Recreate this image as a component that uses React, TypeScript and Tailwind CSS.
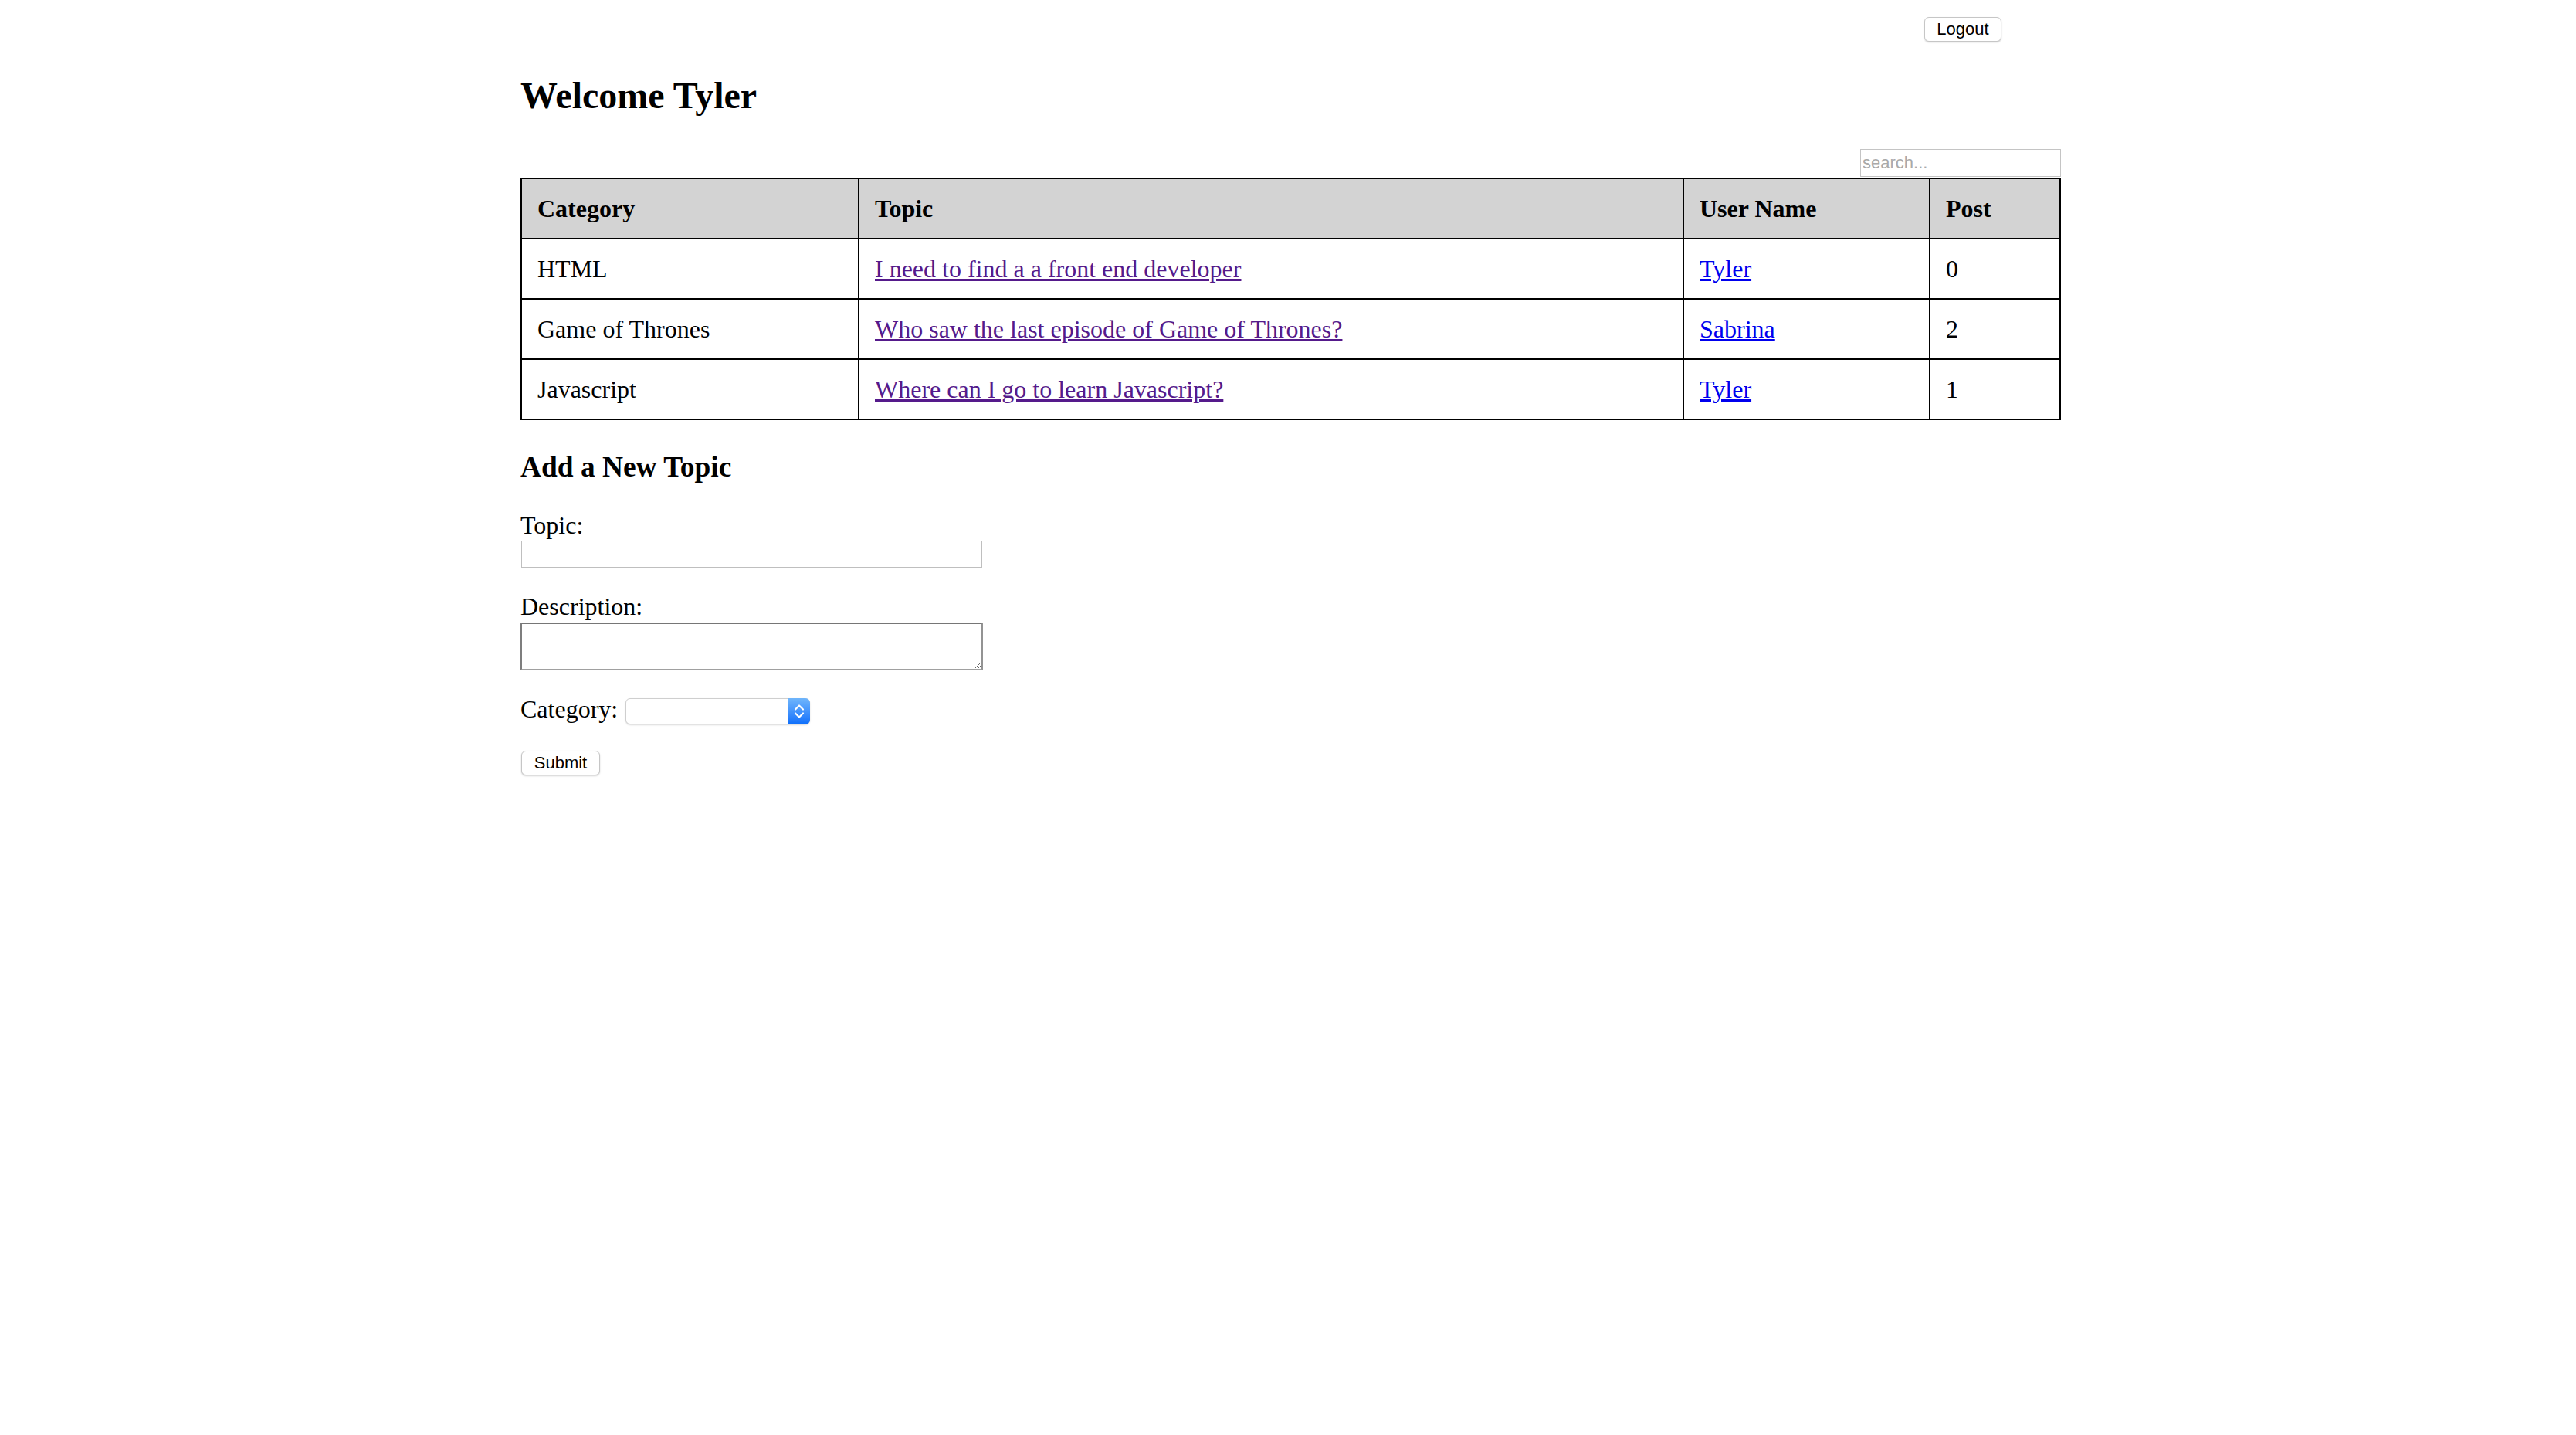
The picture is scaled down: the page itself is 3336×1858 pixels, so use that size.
import { useState } from 'react'

const topics = [
  { category: 'HTML', topic: 'I need to find a a front end developer', user: 'Tyler', posts: 0 },
  { category: 'Game of Thrones', topic: 'Who saw the last episode of Game of Thrones?', user: 'Sabrina', posts: 2 },
  { category: 'Javascript', topic: 'Where can I go to learn Javascript?', user: 'Tyler', posts: 1 },
]

const cell = 'border-2 border-black px-[20px] py-[20px] text-left align-middle leading-[36px]'

const App = () => {
  const [search, setSearch] = useState('')
  const [topic, setTopic] = useState('')
  const [description, setDescription] = useState('')
  const [category, setCategory] = useState('')

  return (
    <div className="min-h-screen bg-white font-['Liberation_Serif',serif] text-[32px] text-black">
      <div className="ml-[674px] w-[1995px] pt-[22px]">
        {/* top bar */}
        <div className="flex justify-end pr-[77px]">
          <button className="h-[32px] w-[100px] rounded-[6px] border border-[#c6c6c6] bg-white font-['Liberation_Sans',sans-serif] text-[22px] leading-none text-black shadow-[0_1px_2px_rgba(0,0,0,0.18)]">
            Logout
          </button>
        </div>

        <h2 className="mt-[42px] text-[48px] font-bold leading-[56px]">Welcome Tyler</h2>

        <div className="mt-[41px] flex justify-end">
          <input
            value={search}
            onChange={(e) => setSearch(e.target.value)}
            placeholder="search..."
            className="h-[36px] w-[260px] border border-[#c4c4c4] px-[2px] font-['Liberation_Sans',sans-serif] text-[22px] text-black outline-none placeholder:text-[#a9a9a9]"
          />
        </div>

        <table className="mt-[1px] w-full table-fixed border-collapse border-2 border-black">
          <colgroup>
            <col className="w-[437px]" />
            <col className="w-[1068px]" />
            <col className="w-[319px]" />
            <col />
          </colgroup>
          <thead>
            <tr className="bg-[#d3d3d3]">
              <th className={`${cell} font-bold`}>Category</th>
              <th className={`${cell} font-bold`}>Topic</th>
              <th className={`${cell} font-bold`}>User Name</th>
              <th className={`${cell} font-bold`}>Post</th>
            </tr>
          </thead>
          <tbody>
            {topics.map((row) => (
              <tr key={row.topic}>
                <td className={cell}>{row.category}</td>
                <td className={cell}>
                  <a href="#" className="text-[#551a8b] underline">
                    {row.topic}
                  </a>
                </td>
                <td className={cell}>
                  <a href="#" className="text-[#0000ee] underline">
                    {row.user}
                  </a>
                </td>
                <td className={cell}>{row.posts}</td>
              </tr>
            ))}
          </tbody>
        </table>

        {/* new topic form */}
        <h3 className="mt-[39px] text-[37.4px] font-bold leading-[43px]">Add a New Topic</h3>

        <form onSubmit={(e) => e.preventDefault()}>
          <label className="mt-[36px] block leading-[36px]">Topic:</label>
          <input
            value={topic}
            onChange={(e) => setTopic(e.target.value)}
            className="mt-[2px] ml-[1px] block h-[35px] w-[597px] border border-[#bfbfbf] outline-none"
          />

          <label className="mt-[32px] block leading-[36px]">Description:</label>
          <textarea
            value={description}
            onChange={(e) => setDescription(e.target.value)}
            className="mt-[3px] block h-[62px] w-[599px] border-2 border-t-[#767676] border-l-[#7e7e7e] border-r-[#939393] border-b-[#a0a0a0] outline-none"
          />

          <div className="mt-[32px] flex items-start">
            <label className="leading-[36px]">Category:</label>
            <div className="relative mt-[4px] ml-[10px] h-[34px] w-[239px]">
              <select
                value={category}
                onChange={(e) => setCategory(e.target.value)}
                className="h-full w-full appearance-none rounded-[6px] border border-[#cfcfcf] bg-white shadow-[0_1px_2px_rgba(0,0,0,0.15)] outline-none"
              >
                <option value=""></option>
                <option value="html">HTML</option>
                <option value="got">Game of Thrones</option>
                <option value="js">Javascript</option>
              </select>
              <div className="pointer-events-none absolute top-0 right-0 flex h-[34px] w-[29px] items-center justify-center rounded-r-[6px] bg-gradient-to-b from-[#6fb5fb] to-[#0a6efb]">
                <svg width="14" height="20" viewBox="0 0 14 20" fill="none" stroke="white" strokeWidth="2.2" strokeLinecap="round" strokeLinejoin="round">
                  <path d="M2 7.5 L7 2.5 L12 7.5" />
                  <path d="M2 12.5 L7 17.5 L12 12.5" />
                </svg>
              </div>
            </div>
          </div>

          <button
            type="submit"
            className="mt-[34px] ml-[1px] block h-[32px] w-[102px] rounded-[6px] border border-[#c6c6c6] bg-white font-['Liberation_Sans',sans-serif] text-[22px] leading-none text-black shadow-[0_1px_2px_rgba(0,0,0,0.18)]"
          >
            Submit
          </button>
        </form>
      </div>
    </div>
  )
}

export default App
